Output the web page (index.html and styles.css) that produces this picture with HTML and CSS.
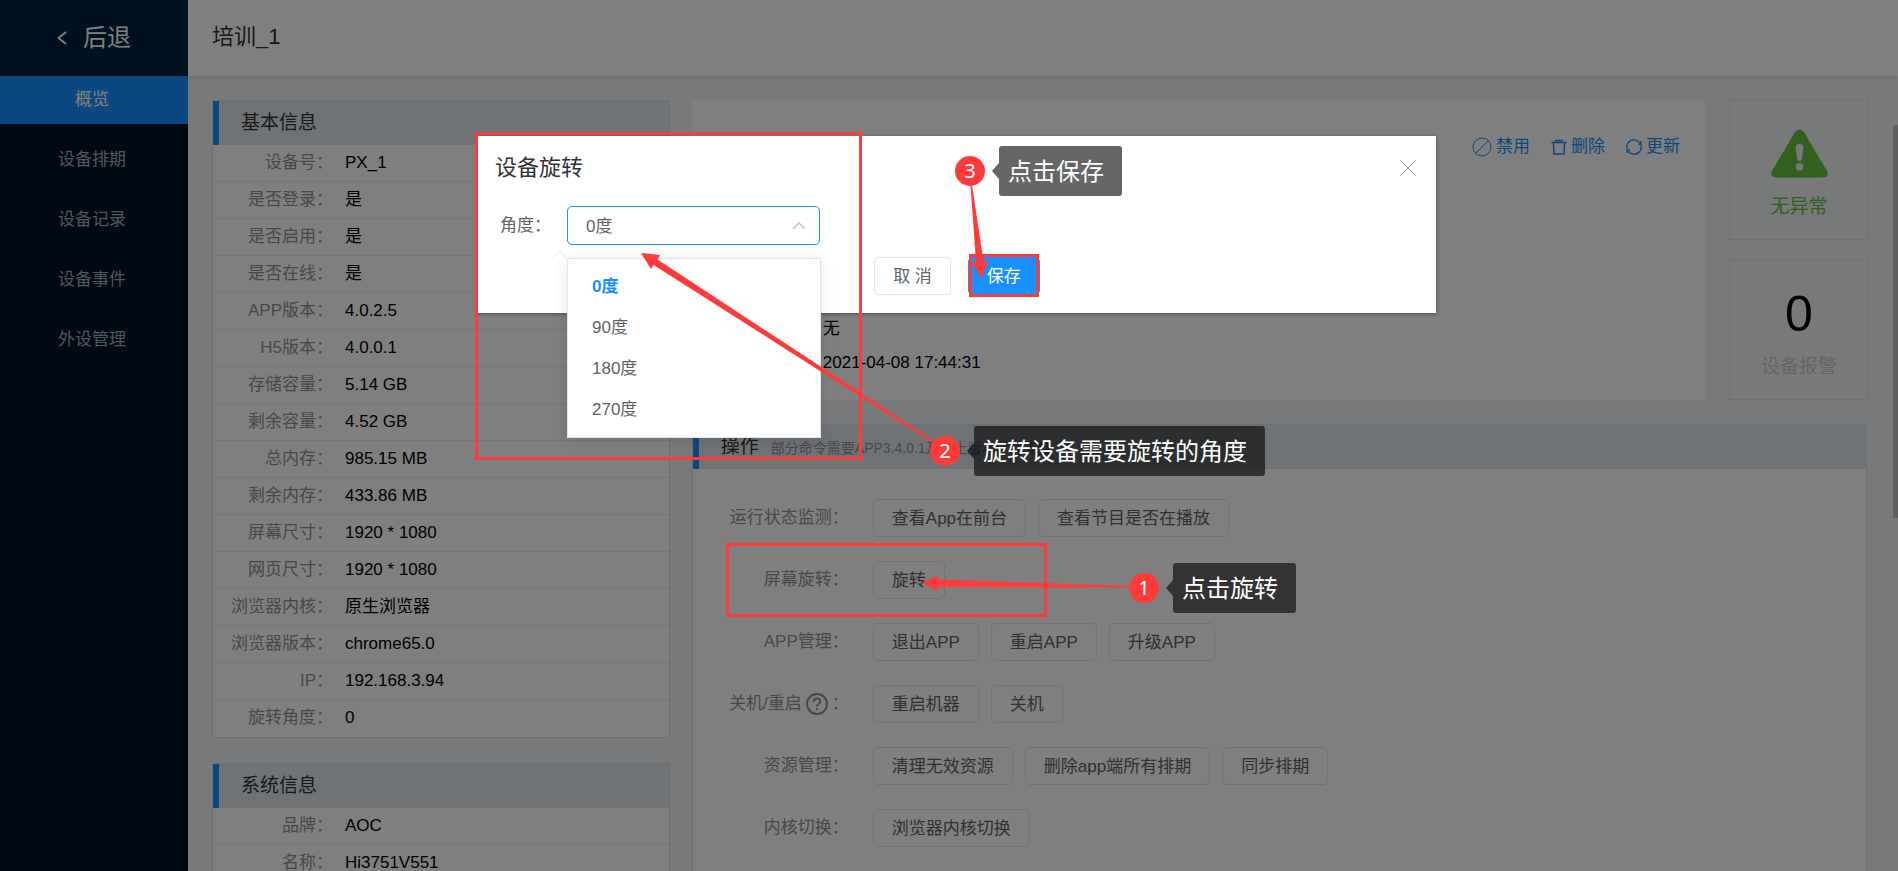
FILE: index.html
```html
<!DOCTYPE html>
<html lang="zh-CN">
<head>
<meta charset="utf-8">
<title>培训_1</title>
<link rel="stylesheet" href="styles.css">
</head>
<body>
<div class="app">
  <aside class="sidebar">
    <a class="back" href="#">
      <svg class="back-icon" viewBox="0 0 10 14"><path d="M9 1 1.500 7 9 13"/></svg>
      <span>后退</span>
    </a>
    <nav class="menu">
      <a class="menu-item active" href="#">概览</a>
      <a class="menu-item" href="#">设备排期</a>
      <a class="menu-item" href="#">设备记录</a>
      <a class="menu-item" href="#">设备事件</a>
      <a class="menu-item" href="#">外设管理</a>
    </nav>
  </aside>
  <div class="main">
    <header class="topbar">培训_1</header>
    <main class="content">
      <div class="left">
        <section class="panel">
          <h2 class="panel-head">基本信息</h2>
          <dl class="rows">
            <div class="row"><dt>设备号：</dt><dd>PX_1</dd></div>
            <div class="row"><dt>是否登录：</dt><dd>是</dd></div>
            <div class="row"><dt>是否启用：</dt><dd>是</dd></div>
            <div class="row"><dt>是否在线：</dt><dd>是</dd></div>
            <div class="row"><dt>APP版本：</dt><dd>4.0.2.5</dd></div>
            <div class="row"><dt>H5版本：</dt><dd>4.0.0.1</dd></div>
            <div class="row"><dt>存储容量：</dt><dd>5.14 GB</dd></div>
            <div class="row"><dt>剩余容量：</dt><dd>4.52 GB</dd></div>
            <div class="row"><dt>总内存：</dt><dd>985.15 MB</dd></div>
            <div class="row"><dt>剩余内存：</dt><dd>433.86 MB</dd></div>
            <div class="row"><dt>屏幕尺寸：</dt><dd>1920 * 1080</dd></div>
            <div class="row"><dt>网页尺寸：</dt><dd>1920 * 1080</dd></div>
            <div class="row"><dt>浏览器内核：</dt><dd>原生浏览器</dd></div>
            <div class="row"><dt>浏览器版本：</dt><dd>chrome65.0</dd></div>
            <div class="row"><dt>IP：</dt><dd>192.168.3.94</dd></div>
            <div class="row"><dt>旋转角度：</dt><dd>0</dd></div>
          </dl>
        </section>
        <section class="panel">
          <h2 class="panel-head">系统信息</h2>
          <dl class="rows">
            <div class="row"><dt>品牌：</dt><dd>AOC</dd></div>
            <div class="row"><dt>名称：</dt><dd>Hi3751V551</dd></div>
          </dl>
        </section>
      </div>
      <div class="right">
        <div class="summary">
          <section class="device">
            <div class="device-info">
              <p>无</p>
              <p>2021-04-08 17:44:31</p>
            </div>
            <div class="device-actions">
              <a href="#"><svg class="ico-ban" viewBox="0 0 20 20"><circle cx="10" cy="10" r="9"/><path d="M3.800 16.200 16.200 3.800"/></svg>禁用</a>
              <a href="#"><svg class="ico-trash" viewBox="0 0 16 16"><path d="M.500 3.500h15M5 3.500v-2h6v2M2.500 3.500l.500 11.500h10l.500-11.500"/></svg>删除</a>
              <a href="#"><svg class="ico-sync" viewBox="0 0 16 16"><path d="M1 9.500A7 7 0 0 1 13.500 3.800M15 6.500A7 7 0 0 1 2.500 12.200M14.800 2v3.200H12M1.200 14v-3.200H4"/></svg>更新</a>
            </div>
          </section>
          <div class="stats">
            <section class="stat ok">
              <svg class="warn" viewBox="0 0 57 49"><path class="warn-body" d="M24 3q4.500-5 9 0l23 39q2.500 6-4 6.500H5q-6.500-.500-4-6.500z"/><path class="warn-mark" d="M28.500 15q4 0 3.800 4l-1.600 12q-2.200 1.500-4.400 0l-1.600-12q-.200-4 3.800-4z"/><circle class="warn-mark" cx="28.500" cy="38" r="3.800"/></svg>
              <span>无异常</span>
            </section>
            <section class="stat">
              <strong>0</strong>
              <span>设备报警</span>
            </section>
          </div>
        </div>
        <section class="panel ops">
          <h2 class="panel-head">操作<small>部分命令需要APP3.4.0.1及以上版本才能支持</small></h2>
          <div class="op-list">
            <div class="op"><span class="op-label">运行状态监测：</span><button>查看App在前台</button><button>查看节目是否在播放</button></div>
            <div class="op"><span class="op-label">屏幕旋转：</span><button>旋转</button></div>
            <div class="op"><span class="op-label">APP管理：</span><button>退出APP</button><button>重启APP</button><button>升级APP</button></div>
            <div class="op"><span class="op-label">关机/重启<svg class="help" viewBox="0 0 22 22"><circle cx="11" cy="11" r="10"/><path d="M7.800 8.800q0-3.300 3.200-3.300t3.200 3q0 1.500-1.700 2.500T11 13.500M11 15v2"/></svg>：</span><button>重启机器</button><button>关机</button></div>
            <div class="op"><span class="op-label">资源管理：</span><button>清理无效资源</button><button>删除app端所有排期</button><button>同步排期</button></div>
            <div class="op"><span class="op-label">内核切换：</span><button>浏览器内核切换</button></div>
          </div>
        </section>
      </div>
    </main>
  </div>
</div>

<div class="scroll-thumb"></div>
<div class="mask">
  <form class="dialog" role="dialog" aria-labelledby="dialog-title">
    <header class="dialog-head">
      <h2 id="dialog-title">设备旋转</h2>
      <button class="close" type="button" aria-label="关闭"><svg viewBox="0 0 14 14"><path d="m1 1 12 12M13 1 1 13"/></svg></button>
    </header>
    <div class="field">
      <label for="angle">角度：</label>
      <div class="select-box">
        <select id="angle"><option>0度</option></select>
        <svg class="caret" viewBox="0 0 14 8"><path d="m1 7 6-6 6 6"/></svg>
        <svg class="pop-arrow" viewBox="0 0 14 8"><path d="m0 7.500 7-7 7 7"/></svg>
        <ul class="options" role="listbox">
          <li class="selected" role="option" aria-selected="true">0度</li>
          <li role="option">90度</li>
          <li role="option">180度</li>
          <li role="option">270度</li>
        </ul>
      </div>
    </div>
    <footer class="dialog-foot">
      <button type="button">取 消</button>
      <button class="primary" type="button">保存</button>
    </footer>
  </form>
</div>

<div class="notes">
  <svg class="arrows">
    <rect x="476.500" y="133.500" width="384" height="325"/>
    <rect x="727.500" y="544.500" width="318" height="71"/>
    <rect x="970.500" y="255.500" width="67" height="40"/>
    <path d="M641 253 660 255 657.500 259.500 934 441 933 443 653.500 265 651 269z"/>
    <path d="M922 583 937.500 575.500V579.500L1130 586V587.500L937.500 587V591z"/>
    <path d="M981.500 278.500 972 262.500 976 261.500 970.500 185H972L983.500 261 988 261z"/>
  </svg>
  <div class="note note-rotate"><b>1</b><span>点击旋转</span></div>
  <div class="note note-angle"><b>2</b><span>旋转设备需要旋转的角度</span></div>
  <div class="note note-save"><b>3</b><span>点击保存</span></div>
</div>
</body>
</html>
```

FILE: styles.css
```css
* { box-sizing: border-box; }

body {
  margin: 0;
  height: 100vh;
  overflow: hidden;
  position: relative;
  font: 17px/24px "Liberation Sans", "Noto Sans CJK SC", sans-serif;
  color: #000;
  background: #f0f2f5;
}

h2, p, dl, dd, ul { margin: 0; padding: 0; font-weight: 400; }
a { text-decoration: none; }
svg { fill: none; stroke: currentColor; flex: none; }

button {
  height: 38px;
  padding: 2px 18px 0;
  border: 1px solid #dfe6ec;
  border-radius: 5px;
  background: #fff;
  font: inherit;
  color: #606266;
  white-space: nowrap;
}

.app { display: flex; height: 100%; }

/* Sidebar */
.sidebar { width: 188px; flex: none; background: #001529; }
.back {
  display: flex;
  align-items: center;
  justify-content: center;
  gap: 16px;
  height: 76px;
  background: #002140;
  color: #fff;
  font-size: 24px;
}
.back-icon { width: 10px; height: 14px; stroke-width: 2; }
.menu { display: flex; flex-direction: column; gap: 12px; }
.menu-item {
  height: 48px;
  padding-right: 4px;
  line-height: 48px;
  text-align: center;
  color: #a6adb4;
}
.menu-item.active { background: #1890ff; color: #fff; }

/* Main area */
.main { flex: 1; min-width: 0; display: flex; flex-direction: column; }
.topbar {
  height: 76px;
  flex: none;
  padding: 0 24px;
  line-height: 74px;
  font-size: 22px;
  color: #303133;
  background: #fff;
  box-shadow: 0 1px 4px rgba(0, 21, 41, .12);
}
.content {
  flex: 1;
  min-height: 0;
  overflow: hidden;
  display: grid;
  grid-template-columns: 7fr 18fr;
  align-items: start;
  gap: 22px;
  padding: 24px 29px 0 24px;
}
.left { display: flex; flex-direction: column; gap: 25px; }
.right { display: flex; flex-direction: column; gap: 24px; min-width: 0; }

.panel { border: 1px solid #dcdfe2; background: #fff; }
.panel-head {
  height: 44px;
  line-height: 44px;
  padding-left: 22px;
  border-left: 6px solid #1890ff;
  background: #dfe6ec;
  font-size: 19px;
  color: #303133;
}
.panel-head small { margin-left: 12px; font-size: 14px; color: #909399; }
.row {
  display: grid;
  grid-template-columns: 120px 1fr;
  gap: 12px;
  height: 37px;
  line-height: 35px;
  border-bottom: 1px solid #ebebeb;
}
.row:last-child { border-bottom: 0; }
.row dt { text-align: right; color: #909090; white-space: nowrap; }

/* Device summary */
.summary { display: flex; gap: 24px; }
.device {
  flex: 1;
  display: flex;
  justify-content: space-between;
  padding: 35px 25px 25px 131px;
  background: #fff;
}
.device-info { display: flex; flex-direction: column; gap: 10px; align-self: flex-end; }
.device-actions { display: flex; align-items: flex-start; gap: 21px; }
.device-actions a { display: flex; align-items: center; gap: 4px; color: #1890ff; }
.ico-ban { width: 20px; height: 20px; }
.ico-trash, .ico-sync { width: 16px; height: 16px; stroke-width: 1.5; }

.stats { display: flex; flex-direction: column; gap: 20px; width: 140px; }
.stat {
  height: 140px;
  display: flex;
  flex-direction: column;
  align-items: center;
  justify-content: space-between;
  padding: 28px 0 20px;
  border: 1px solid #dcdfe2;
  font-size: 19px;
  color: #c8c9cc;
}
.stat.ok { color: #67c23a; }
.stat strong { font-size: 50px; line-height: 50px; font-weight: 400; color: #000; }
.warn { width: 57px; height: 49px; stroke: none; }
.warn-body { fill: #67c23a; }
.warn-mark { fill: #f0f2f5; }

/* Operations */
.ops { margin-right: 2px; }
.op-list { display: flex; flex-direction: column; gap: 24px; padding: 30px 0 200px; }
.op { display: flex; gap: 12px; }
.op-label {
  width: 156px;
  margin-right: 12px;
  display: flex;
  justify-content: flex-end;
  align-items: center;
  height: 38px;
  color: #909090;
  white-space: nowrap;
}
.help { width: 22px; height: 22px; margin: 0 4px; stroke-width: 2; }

/* Page scrollbar */
.scroll-thumb {
  position: absolute;
  top: 125px;
  right: 0;
  width: 5px;
  height: 393px;
  background: #c0c0c0;
}

/* Dialog */
.mask {
  position: absolute;
  inset: 0;
  display: flex;
  justify-content: center;
  align-items: flex-start;
  padding: 136px 0 0 16px;
  background: rgba(0, 0, 0, .5);
}
.dialog {
  width: 51%;
  max-width: 958px;
  padding: 17px 17px 18px;
  background: #fff;
  box-shadow: 0 1px 4px rgba(0, 0, 0, .4);
}
.dialog-head { display: flex; justify-content: space-between; }
.dialog-head h2 { font-size: 22px; line-height: 30px; color: #303133; }
.close { height: 30px; padding: 4px; border: 0; color: #909399; line-height: 0; }
.close svg { width: 14px; height: 14px; }
.field { display: flex; align-items: center; margin-top: 23px; padding-left: 5px; color: #606266; }
.field label { width: 67px; }
.select-box { position: relative; width: 253px; }
.select-box select {
  display: block;
  width: 100%;
  height: 39px;
  padding: 2px 18px 0;
  border: 1px solid #1890ff;
  border-radius: 5px;
  background: #fff;
  appearance: none;
  font: inherit;
  color: #606266;
}
.caret { position: absolute; right: 14px; top: 16px; width: 14px; height: 8px; color: #c0c4cc; stroke-width: 1.5; }
.pop-arrow { position: absolute; left: -14px; top: 45px; width: 14px; height: 8px; color: #e4e7ed; }
.options {
  position: absolute;
  top: 52px;
  left: 0;
  width: 254px;
  padding: 7px 0;
  list-style: none;
  line-height: 41px;
  background: #fff;
  border: 1px solid #dfe4ed;
  box-shadow: 0 2px 14px rgba(0, 0, 0, .1);
}
.options li { padding-left: 24px; }
.options .selected { color: #1890ff; font-weight: 700; }
.dialog-foot { display: flex; justify-content: center; gap: 17px; margin-top: 12px; }
.dialog-foot .primary { background: #1890ff; border-color: #1890ff; color: #fff; }

/* Step notes drawn over the page */
.notes { position: absolute; inset: 0; pointer-events: none; }
.arrows { position: absolute; width: 100%; height: 100%; }
.arrows rect { stroke: #ff3a3a; stroke-width: 3; }
.arrows path { fill: #ff3a3a; stroke: none; }
.note { position: absolute; display: flex; align-items: center; gap: 14px; color: #fff; }
.note b {
  width: 30px;
  height: 30px;
  border-radius: 50%;
  background: #ff3a3a;
  font: 20px/30px "Noto Sans", sans-serif;
  text-align: center;
}
.note span {
  position: relative;
  padding: 2px 18px 0 9px;
  border-radius: 3px;
  background: rgba(0, 0, 0, .6);
  font-size: 24px;
  line-height: 48px;
  white-space: nowrap;
}
.note span::before {
  content: "";
  position: absolute;
  right: 100%;
  top: 17px;
  border: solid transparent;
  border-width: 8px 7px 8px 0;
  border-right-color: rgba(0, 0, 0, .6);
}
.note-rotate { left: 1129px; top: 563px; }
.note-angle { left: 930px; top: 426px; }
.note-save { left: 955px; top: 146px; }
```
